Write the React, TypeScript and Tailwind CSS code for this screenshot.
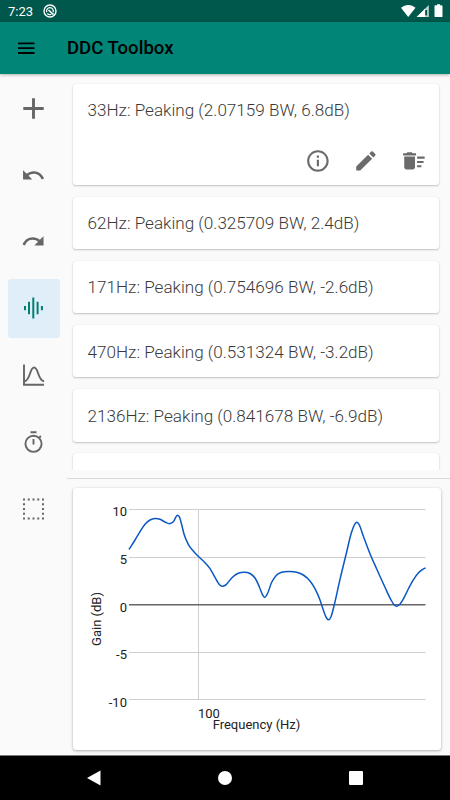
import React, { useState } from "react";
import { MdAdd, MdDeleteSweep, MdEdit, MdOutlineInfo, MdRedo, MdUndo } from "react-icons/md";

type Filter = {
  freq: number;
  bandwidth: string;
  gain: string;
};

const filters: Filter[] = [
  { freq: 33, bandwidth: "2.07159", gain: "6.8" },
  { freq: 62, bandwidth: "0.325709", gain: "2.4" },
  { freq: 171, bandwidth: "0.754696", gain: "-2.6" },
  { freq: 470, bandwidth: "0.531324", gain: "-3.2" },
  { freq: 2136, bandwidth: "0.841678", gain: "-6.9" },
];

// Sampled response, in chart card coordinates
const response: [number, number][] = [
  [56, 61.5], [62, 52], [67, 43.7], [72, 36.3], [77, 32], [82, 30.5], [87, 31.3], [92, 34], [97, 35.6],
  [100.3, 33.7], [104.5, 27.2], [106.5, 29], [108.5, 36], [111, 46], [115.3, 56.3], [120.3, 63], [125.3, 68.3],
  [132, 74.7], [137, 80.7], [142, 89.3], [146.3, 96.5], [149, 98.3], [152.7, 97], [158.7, 90], [163.7, 86],
  [170.3, 84.2], [177, 85.5], [182, 90], [186.3, 98.7], [189.7, 107], [191.7, 109.4], [194.3, 106], [198.7, 94.3],
  [203, 87.7], [208.7, 84.3], [216.3, 83.4], [223.7, 84.2], [230.3, 87], [237, 93], [242, 100.7], [247, 112],
  [251, 124], [253.7, 130.2], [255.7, 131.8], [258, 128.7], [261, 118], [267, 91.3], [273, 66.7], [278.7, 43.8],
  [281.7, 36.3], [284, 34.3], [286, 36.3], [290.3, 48], [297, 65.8], [303.7, 81], [312, 99.3], [317.7, 111.3],
  [321.3, 117], [323.7, 118.2], [326.3, 116.7], [330.3, 111], [335.3, 101], [340.3, 91.8], [345.3, 85], [349.3, 81.7],
  [352.5, 79.8],
];

// Cubic Hermite through the samples, slopes weighted by spacing
const smoothPath = (pts: [number, number][]) => {
  const slope = (a: [number, number], b: [number, number]) => (b[1] - a[1]) / (b[0] - a[0]);
  const m = pts.map((p, i) => {
    if (i === 0) return slope(p, pts[1]);
    if (i === pts.length - 1) return slope(pts[i - 1], p);
    const h0 = p[0] - pts[i - 1][0];
    const h1 = pts[i + 1][0] - p[0];
    return (slope(pts[i - 1], p) * h1 + slope(p, pts[i + 1]) * h0) / (h0 + h1);
  });
  let d = `M${pts[0][0]} ${pts[0][1]}`;
  for (let i = 0; i < pts.length - 1; i++) {
    const [x0, y0] = pts[i];
    const [x1, y1] = pts[i + 1];
    const h = (x1 - x0) / 3;
    d += `C${x0 + h} ${y0 + m[i] * h} ${x1 - h} ${y1 - m[i + 1] * h} ${x1} ${y1}`;
  }
  return d;
};

const WaveIcon = () => (
  <svg width="22" height="22" viewBox="0 0 22 22" fill="currentColor">
    <path d="M1 8.9h2v4.300h-2zM5 4.800h2v12.500h-2zM9.300 .5h2v21h-2zM13.600 4.800h2v12.500h-2zM17.900 8.900h2v4.300h-2z" />
  </svg>
);

const BellIcon = () => (
  <svg width="22" height="22" viewBox="0 0 22 22" fill="none" stroke="currentColor" strokeWidth="1.9">
    <path d="M1 .5v20.300H21" />
    <path d="M1.100 17.500C7.600 17 6.400 3.500 11.100 3.500S14.600 16.800 21.100 17.200" />
  </svg>
);

const TimerIcon = () => (
  <svg width="22" height="22" viewBox="0 0 22 22" fill="none" stroke="currentColor" strokeWidth="1.9">
    <circle cx="10.500" cy="12.800" r="8.100" />
    <path d="M7.500 1.200h6M10.500 8v5.500M16.100 6.800l1.800-1.800" />
  </svg>
);

const SelectIcon = () => (
  <svg width="22" height="22" viewBox="0 0 22 22" fill="none" stroke="currentColor" strokeWidth="2" strokeDasharray="2 2.75">
    <path d="M0 1.500h21M0 20.500h21M1 5.250v12M20 5.250v12" />
  </svg>
);

const tools = [
  { name: "add", icon: <MdAdd size={35} /> },
  { name: "undo", icon: <MdUndo size={24.6} /> },
  { name: "redo", icon: <MdRedo size={24.6} /> },
  { name: "filters", icon: <WaveIcon /> },
  { name: "response", icon: <BellIcon /> },
  { name: "delay", icon: <TimerIcon /> },
  { name: "select", icon: <SelectIcon /> },
];

const StatusBar = () => (
  <div className="h-[22px] shrink-0 bg-[#00574b] flex items-center justify-between pl-2 pr-[7px] text-white">
    <div className="flex items-center gap-[10px]">
      <span className="text-[13px] leading-[22px] pt-px">7:23</span>
      <svg width="14" height="14" viewBox="0 0 14 14" fill="none" stroke="white">
        <circle cx="7" cy="7" r="6" strokeWidth="1.4" />
        <path d="M3.700 8.200A3.400 3.400 0 1 1 10.100 8.300M4.300 9.500a3.400 3.400 0 0 0 4 .7" strokeWidth="1.2" />
        <path d="M5.500 6l5 4.600" strokeWidth="1.600" />
      </svg>
    </div>
    <svg width="42" height="14" viewBox="0 0 42 14" fill="white">
      <path d="M0 3.800C4-.1 10.500-.1 14.500 3.800L7.200 13z" />
      <path d="M15.700 13L27.800 1v12z" opacity=".75" />
      <path d="M15.700 13L24 4.800V13z" />
      <path d="M24.200 6h1.900v5.400h-1.900z" fill="#00574b" />
      <path d="M34 1.300h2V.2h3v1.100h1.600q.9 0 .9.900v10q0 .9-.9.900H34.400q-.9 0-.9-.9v-10q0-.9.9-.9z" />
    </svg>
  </div>
);

const FilterCard = ({ filter, expanded, onClick }: { filter: Filter; expanded: boolean; onClick: () => void }) => (
  <div
    onClick={onClick}
    className="shrink-0 bg-white rounded-[3px] shadow-[0_1px_2px_rgba(0,0,0,0.22),0_0_1px_rgba(0,0,0,0.12)] px-[15px]"
  >
    <div className="h-[52.6px] flex items-center text-[17.1px] font-light text-[#3a3a3a] whitespace-nowrap pt-[2.4px]">
      {filter.freq}Hz: Peaking ({filter.bandwidth} BW, {filter.gain}dB)
    </div>
    {expanded && (
      <div className="h-[48.8px] flex justify-end gap-[22.5px] -mr-[2.9px] pt-[11.2px] text-[#6b6b6b]">
        <MdOutlineInfo size={25.8} />
        <MdEdit size={25.8} />
        <MdDeleteSweep size={25.8} />
      </div>
    )}
  </div>
);

const ResponseChart = () => (
  <svg width="368" height="262" viewBox="0 0 368 262" fontFamily="Roboto, sans-serif" fontSize="13" fontWeight="400">
    <g stroke="#cfcfcf" strokeWidth="1">
      <path d="M56 21.500H352.500M56 69.500H352.500M56 164.500H352.500M56 211.500H352.500" />
      <path d="M125.500 21.500V212" />
    </g>
    <path d="M56 116.700H352.500" stroke="#666" strokeWidth="1.400" />
    <g fill="#222" textAnchor="end">
      <text x="54" y="28">10</text>
      <text x="54" y="76">5</text>
      <text x="54" y="123.500">0</text>
      <text x="54" y="171">-5</text>
      <text x="54" y="218.500">-10</text>
    </g>
    <g fill="#222">
      <text x="125" y="229.500">100</text>
      <text x="183.500" y="240.500" textAnchor="middle">Frequency (Hz)</text>
      <text transform="translate(28 131) rotate(-90)" textAnchor="middle">Gain (dB)</text>
    </g>
    <path d={smoothPath(response)} fill="none" stroke="#0b57c4" strokeWidth="1.500" />
  </svg>
);

export default function App() {
  const [expanded, setExpanded] = useState(0);
  const [activeTool, setActiveTool] = useState("filters");

  return (
    <div className="w-[450px] h-[800px] overflow-hidden flex flex-col bg-[#fafafa] font-['Roboto',sans-serif]">
      <StatusBar />

      <header className="relative z-10 h-[52px] shrink-0 bg-[#008577] shadow-[0_1px_3px_rgba(0,0,0,0.3)] flex items-center pl-[18px] text-black">
        <svg width="17" height="12" viewBox="0 0 17 12" stroke="currentColor" strokeWidth="1.800">
          <path d="M0 1.300H16.500M0 6.200H16.500M0 11H16.500" />
        </svg>
        <h1 className="ml-8 pt-[2px] text-[18.57px] font-medium">DDC Toolbox</h1>
      </header>

      <div className="flex-1 min-h-0 flex">
        {/* Tool rail */}
        <nav className="w-[67px] shrink-0 pt-[4.5px] flex flex-col items-center gap-[7.8px]">
          {tools.map((tool) => (
            <button
              key={tool.name}
              onClick={() => setActiveTool(tool.name)}
              className={`w-[52px] h-[59px] shrink-0 rounded-[3px] flex items-center justify-center ${
                activeTool === tool.name ? "bg-[#e0eef9] text-[#008071]" : "text-[#666]"
              }`}
            >
              {tool.icon}
            </button>
          ))}
        </nav>

        <main className="flex-1 min-w-0 flex flex-col">
          <div className="h-[396px] shrink-0 overflow-hidden pt-[9.8px] pl-[5.5px] pr-[11px] flex flex-col gap-[11.5px]">
            {filters.map((filter, i) => (
              <FilterCard key={filter.freq} filter={filter} expanded={expanded === i} onClick={() => setExpanded(i)} />
            ))}
            {/* Next row, still below the fold */}
            <div className="h-[52.6px] shrink-0 bg-white rounded-[3px] shadow-[0_1px_2px_rgba(0,0,0,0.22),0_0_1px_rgba(0,0,0,0.12)]" />
          </div>
          <div className="mt-2 h-px shrink-0 bg-[#d9d9d9]" />
          <div className="mt-[9px] ml-[5.5px] w-[368px] h-[262px] shrink-0 bg-white rounded-[3px] shadow-[0_1px_3px_rgba(0,0,0,0.3),0_0_1px_rgba(0,0,0,0.12)]">
            <ResponseChart />
          </div>
        </main>
      </div>

      <footer className="relative z-10 h-[45px] shrink-0 bg-black border-t border-[#777] flex items-center justify-between pl-[86.5px] pr-[87px]">
        <svg width="14" height="16" viewBox="0 0 14 16" fill="white">
          <path d="M0 8L13.500 .5v15z" />
        </svg>
        <div className="size-[14px] rounded-full bg-white" />
        <div className="size-[14.5px] rounded-[1px] bg-white" />
      </footer>
    </div>
  );
}
